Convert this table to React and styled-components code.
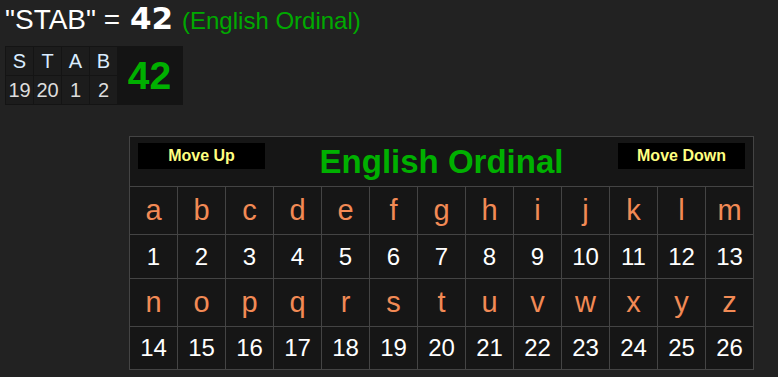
import React from "react";
import styled, { createGlobalStyle } from "styled-components";

const GlobalStyle = createGlobalStyle`
  html, body {
    margin: 0;
    padding: 0;
    background-color: #222222;
  }
  body {
    font-family: "Liberation Sans", Arial, sans-serif;
    color: #ffffff;
  }
`;

const word = "STAB";
const cipherName = "English Ordinal";
const letters = "abcdefghijklmnopqrstuvwxyz".split("");
const valueOf = (ch) => ch.toLowerCase().charCodeAt(0) - 96;
const total = word.split("").reduce((sum, ch) => sum + valueOf(ch), 0);

const App = () => {
  const firstHalf = letters.slice(0, 13);
  const secondHalf = letters.slice(13);

  return (
    <>
      <GlobalStyle />
      <StPage>
        <StHeadline>
          <span>"{word}" = </span>
          <StSum>{total}</StSum>
          <StCipher>({cipherName})</StCipher>
        </StHeadline>

        <StBreakdown>
          <StLetters>
            {word.split("").map((ch, i) => (
              <StMiniCell key={"l" + i} $letter>{ch}</StMiniCell>
            ))}
            {word.split("").map((ch, i) => (
              <StMiniCell key={"n" + i}>{valueOf(ch)}</StMiniCell>
            ))}
          </StLetters>
          <StTotal>{total}</StTotal>
        </StBreakdown>

        <StChart>
          <StChartHead>
            <StButton>Move Up</StButton>
            <StTitle>{cipherName}</StTitle>
            <StButton>Move Down</StButton>
          </StChartHead>
          {firstHalf.map((ch) => (
            <StCell key={ch} $letter>{ch}</StCell>
          ))}
          {firstHalf.map((ch) => (
            <StCell key={"v" + ch}>{valueOf(ch)}</StCell>
          ))}
          {secondHalf.map((ch) => (
            <StCell key={ch} $letter>{ch}</StCell>
          ))}
          {secondHalf.map((ch) => (
            <StCell key={"v" + ch}>{valueOf(ch)}</StCell>
          ))}
        </StChart>
      </StPage>
    </>
  );
};

export default App;

const StPage = styled.div`
  padding: 0 5px;
`;

const StHeadline = styled.div`
  display: flex;
  align-items: baseline;
  height: 38px;
  font-size: 28px;
  white-space: pre;
  color: #ffffff;
`;

const StSum = styled.span`
  margin: 0 9px 0 2px;
  font-family: "DejaVu Sans", Verdana, sans-serif;
  font-weight: bold;
  font-size: 31px;
`;

const StCipher = styled.span`
  font-size: 24px;
  color: #00aa00;
`;

const StBreakdown = styled.div`
  display: inline-flex;
  margin-top: 8px;
  padding: 1px;
  background-color: #141414;
`;

const StLetters = styled.div`
  display: grid;
  grid-template-columns: repeat(4, 27px);
  grid-template-rows: 28px 28px;
  gap: 1px;
`;

const StMiniCell = styled.div`
  display: flex;
  align-items: center;
  justify-content: center;
  background-color: #1c1c1c;
  font-size: 20px;
  color: ${({ $letter }) => ($letter ? "#d9ecff" : "#dddddd")};
`;

const StTotal = styled.div`
  display: flex;
  align-items: center;
  justify-content: center;
  width: 65px;
  font-size: 39px;
  font-weight: bold;
  color: #00b000;
`;

const StChart = styled.div`
  display: grid;
  grid-template-columns: repeat(13, 47px);
  grid-template-rows: 49px 47px 43px 47px 42px;
  gap: 1px;
  width: max-content;
  margin: 31px 0 0 124px;
  padding: 1px;
  background-color: #444444;
`;

const StChartHead = styled.div`
  grid-column: 1 / -1;
  display: flex;
  align-items: center;
  justify-content: space-between;
  padding: 0 8px;
  background-color: #161616;
`;

const StButton = styled.button`
  width: 127px;
  height: 26px;
  margin-top: -11px;
  padding: 0;
  border: none;
  background-color: #000000;
  color: #ffff80;
  font-family: "Liberation Sans", Arial, sans-serif;
  font-weight: bold;
  font-size: 16px;
`;

const StTitle = styled.div`
  font-size: 33px;
  font-weight: bold;
  color: #00b000;
`;

const StCell = styled.div`
  display: flex;
  align-items: center;
  justify-content: center;
  background-color: #161616;
  font-size: ${({ $letter }) => ($letter ? "29px" : "24px")};
  color: ${({ $letter }) => ($letter ? "#f28a55" : "#ffffff")};
`;
